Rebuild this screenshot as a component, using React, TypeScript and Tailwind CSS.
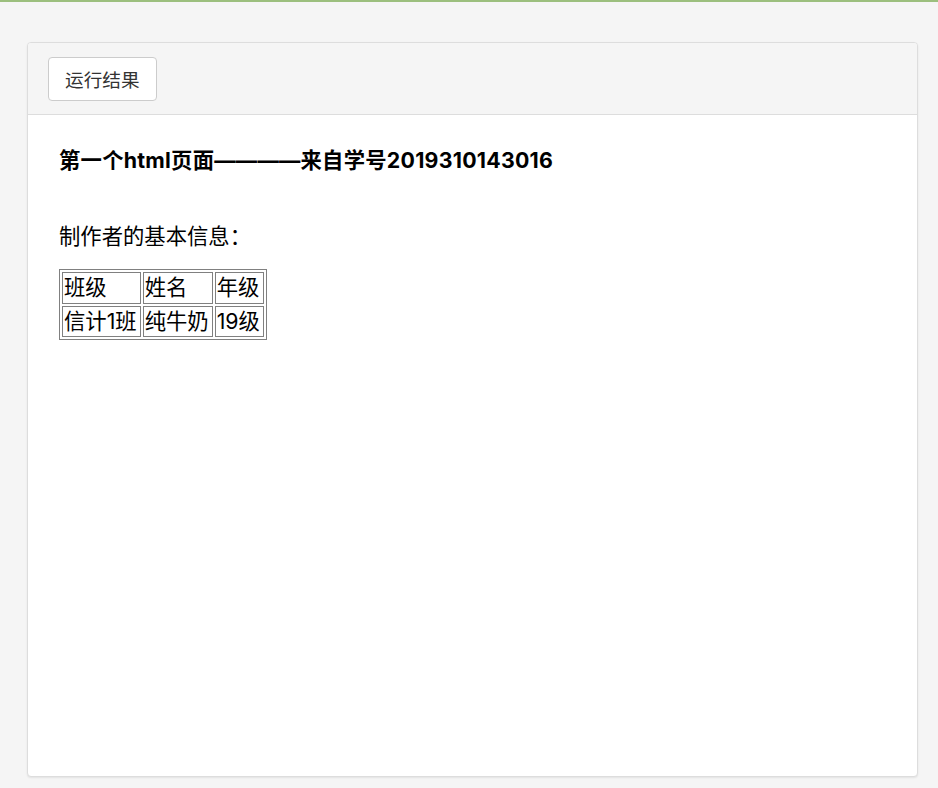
export default function App() {
  const rows = [
    ["班级", "姓名", "年级"],
    ["信计1班", "纯牛奶", "19级"],
  ];
  return (
    <div className="min-h-[788px] bg-[#f5f5f5] font-['Noto_Sans_CJK_SC','Noto_Sans',sans-serif]">
      <div className="h-[2px] bg-[#9cbf7e]" />
      <div className="pt-[40px] pl-[27px]">
        <div className="w-[891px] h-[735px] bg-white border border-[#dddddd] rounded-[4px] shadow-[0_1px_2px_rgba(0,0,0,0.08)] overflow-hidden flex flex-col">
          <div className="h-[72px] bg-[#f5f5f5] border-b border-[#dddddd] flex items-center px-[20px] shrink-0">
            <button className="h-[44px] px-[16px] bg-white border border-[#cccccc] rounded-[4px] text-[18.67px] text-[#333333]">
              运行结果
            </button>
          </div>
          <div className="px-[31px] pt-[31px] text-black font-['Inter','Noto_Sans_CJK_SC',sans-serif]">
            <h3 className="text-[21.33px] font-bold leading-[28px] tracking-[0.25px]">
              第一个html页面————来自学号2019310143016
            </h3>
            <p className="mt-[48px] text-[21.33px] leading-[28px]">制作者的基本信息：</p>
            <table className="mt-[19px] border border-[#808080] border-separate border-spacing-[2px] text-[21.33px] leading-[27.5px]">
              <tbody>
                {rows.map((r, i) => (
                  <tr key={i}>
                    {r.map((c, j) => (
                      <td key={j} className="border border-[#808080] pl-[1px] pr-[3px] py-[1px] text-left">
                        {c}
                      </td>
                    ))}
                  </tr>
                ))}
              </tbody>
            </table>
          </div>
        </div>
      </div>
    </div>
  );
}
